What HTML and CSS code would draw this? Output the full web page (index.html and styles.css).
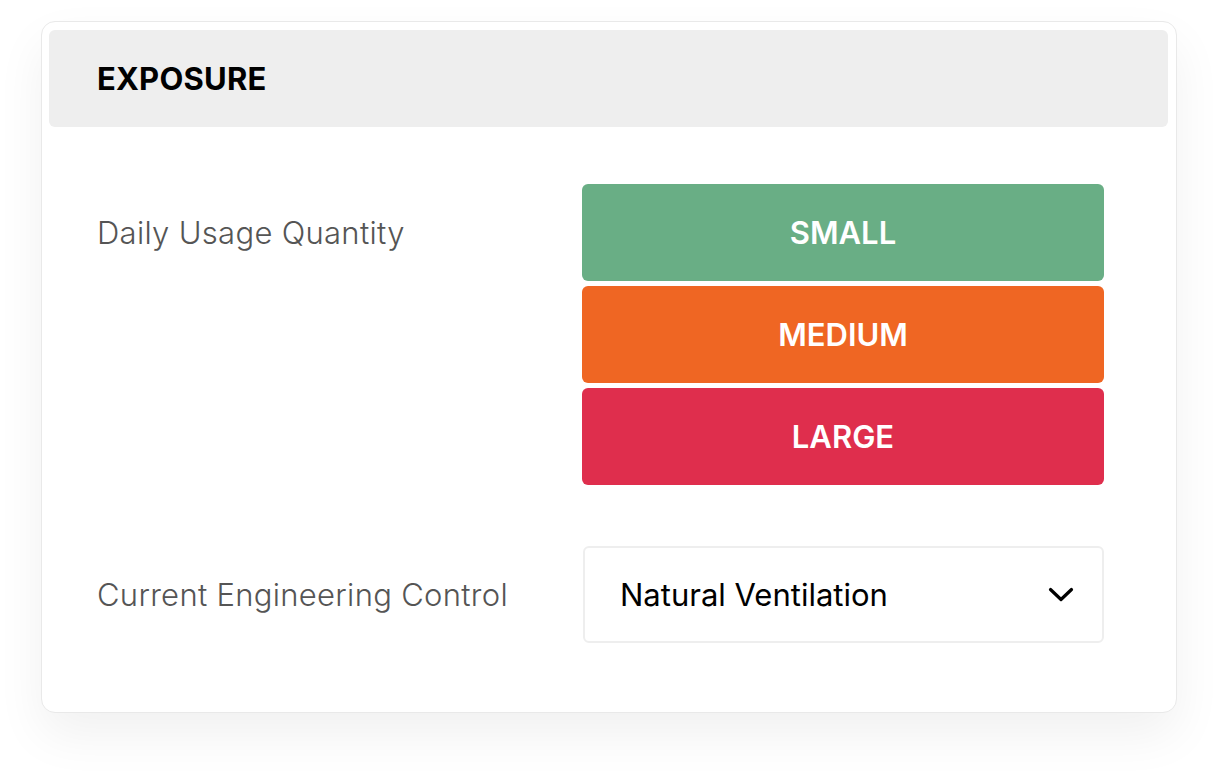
FILE: index.html
```html
<!DOCTYPE html>
<html lang="en">
<head>
  <meta charset="UTF-8" />
  <meta name="viewport" content="width=device-width, initial-scale=1.0" />
  <title>Exposure</title>
  <link rel="stylesheet" href="styles.css">
</head>
<body>
  <div class="card">
    <div class="card-header">EXPOSURE</div>
    <div class="card-body">
      <div class="field">
        <div class="label">Daily Usage Quantity</div>
        <div class="options">
          <button class="opt small">SMALL</button>
          <button class="opt medium">MEDIUM</button>
          <button class="opt large">LARGE</button>
        </div>
      </div>
      <div class="field">
        <div class="label">Current Engineering Control</div>
        <div class="select">
          <span>Natural Ventilation</span>
          <svg class="chevron" width="26" height="16" viewBox="0 0 26 16">
            <path d="M2.5 2.5 L13 12.5 L23.5 2.5" fill="none" stroke="#000" stroke-width="3.2" stroke-linecap="round" stroke-linejoin="round"/>
          </svg>
        </div>
      </div>
    </div>
  </div>
</body>
</html>
```

FILE: styles.css
```css
html, body {
  margin: 0;
  min-height: 100vh;
  background: #fff;
  font-family: Inter, 'Noto Sans', sans-serif;
}
.card {
  margin: 21px 0 0 41px;
  width: 1136px;
  padding: 8px 8px 8px 7px;
  box-sizing: border-box;
  border: 1px solid #e9e9e9;
  border-radius: 14px;
  background: #fff;
  box-shadow: 0 22px 50px rgba(0, 0, 0, 0.06);
}
.card-header {
  background: #eeeeee;
  border-radius: 6px;
  height: 97px;
  padding-left: 48px;
  display: flex;
  align-items: center;
  font-size: 31px;
  font-weight: 700;
  letter-spacing: 0.2px;
  color: #000;
}
.card-body {
  padding: 57px 63px 61px 48px;
  display: flex;
  flex-direction: column;
  gap: 61px;
}
.field {
  display: grid;
  grid-template-columns: 485px 522px;
  align-items: start;
}
.label {
  line-height: 97px;
  font-size: 31px;
  font-weight: 350;
  color: #555;
  letter-spacing: 0.3px;
}
.options {
  display: flex;
  flex-direction: column;
  gap: 5px;
}
.opt {
  height: 97px;
  border: none;
  border-radius: 6px;
  color: #fff;
  font-family: inherit;
  font-size: 31px;
  font-weight: 600;
  cursor: pointer;
}
.small { background: #69ae85; }
.medium { background: #ef6623; }
.large { background: #df2e4d; }
.select {
  height: 97px;
  box-sizing: border-box;
  margin-left: 1px;
  border: 2px solid #eeeeee;
  border-radius: 6px;
  display: flex;
  align-items: center;
  justify-content: space-between;
  padding: 0 28px 0 35px;
  font-size: 31px;
  color: #000;
}
.chevron { display: block; }
```
